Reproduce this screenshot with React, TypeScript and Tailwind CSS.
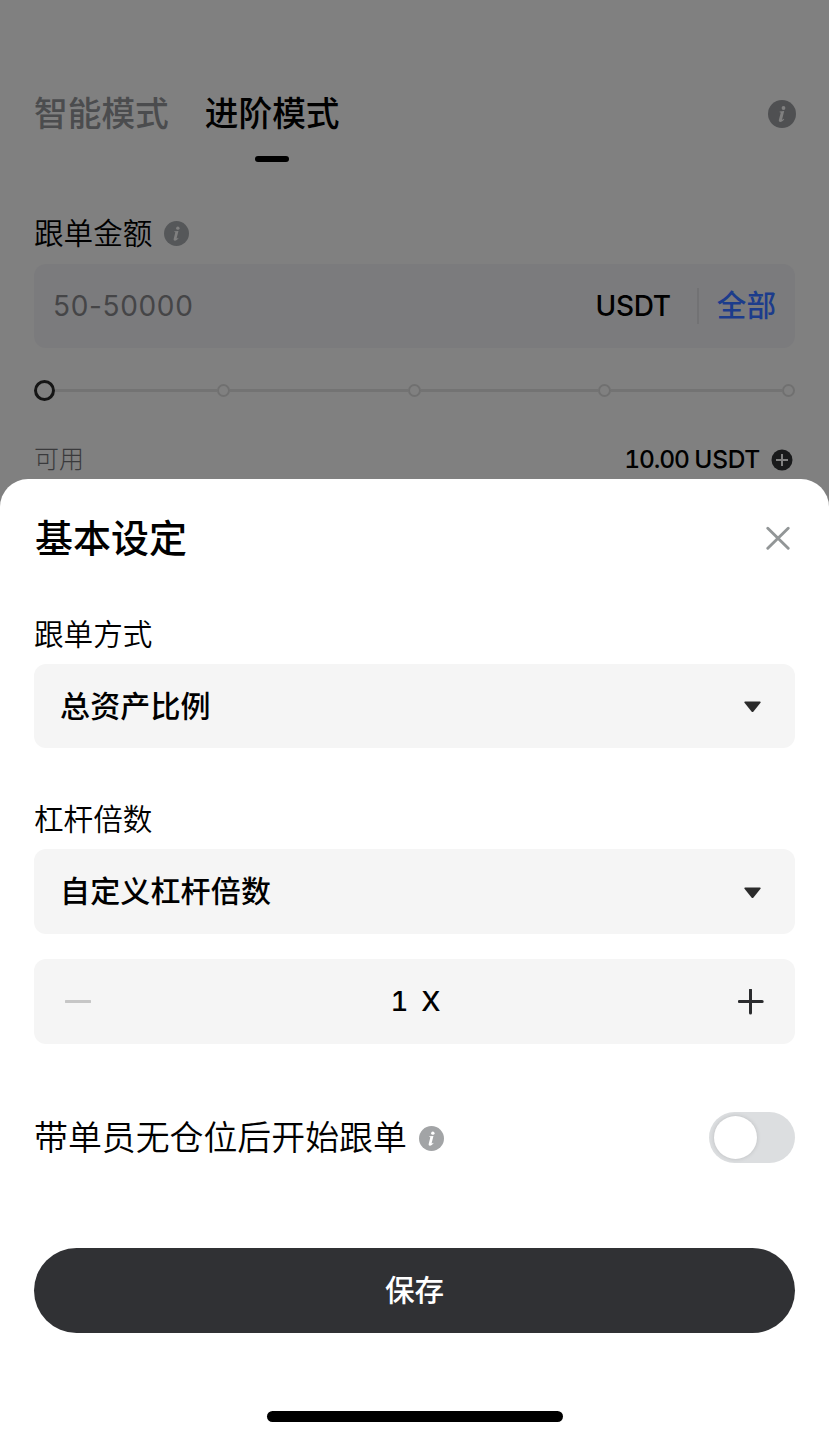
import React from "react";

const InfoIcon = ({ className }: { className: string }) => (
  <svg viewBox="0 0 28 28" className={`shrink-0 ${className}`} aria-hidden="true">
    <circle cx="14" cy="14" r="14" fill="currentColor" />
    <g className="fill-(--mark)">
      <circle cx="15.5" cy="8" r="1.9" />
      <path d="M11.7 11.4 L16.2 11.1 L14.2 19.1 C14 20 14.5 20 15.7 18.7 L16.3 19.3 C14.9 21.2 13.6 22 12.3 22 C11 22 10.6 21.1 10.9 19.8 L12.6 13.2 C12.8 12.4 12.5 12.3 11.5 12.2 Z" />
    </g>
  </svg>
);

const Caret = () => (
  <svg viewBox="0 0 18 12" className="mt-0.5 h-3 w-[18px] text-[#2b2b2b]" aria-hidden="true">
    <path d="M1.1 .6 H15.9 Q17.2 .8 16.3 2.1 L9.5 10.6 Q8.5 11.6 7.5 10.6 L.7 2.1 Q-.2 .8 1.1 .6 Z" fill="currentColor" />
  </svg>
);

const Step = () => <span className="size-[13px] shrink-0 rounded-full border-2 border-[#707070]" />;
const Rail = ({ className }: { className: string }) => <span className={`h-[3px] bg-[#737373] ${className}`} />;

const Select = ({ label, className }: { label: string; className: string }) => (
  <button className={`flex w-full items-center justify-between rounded-xl bg-[#f5f5f5] pr-[33px] pl-[26px] text-[30px] leading-none font-medium tracking-[0.15px] ${className}`}>
    <span className="-mt-px">{label}</span>
    <Caret />
  </button>
);

export default function App() {
  return (
    <div className="flex h-[1439px] w-[829px] flex-col overflow-hidden bg-[#808080] font-[Inter,'Noto_Sans_CJK_SC',sans-serif] text-black">
      <section className="flex h-[479px] shrink-0 flex-col px-[34px]">
        <header className="flex h-[162px] shrink-0 items-start justify-between pt-[93px]">
          <nav className="flex gap-[36px] text-[33.7px] leading-[42px] font-medium">
            <span className="text-[#4b4c4e]">智能模式</span>
            <div className="flex flex-col items-center">
              <span>进阶模式</span>
              <span className="mt-[21px] h-1.5 w-[34px] rounded-[3px] bg-black" />
            </div>
          </nav>
          <InfoIcon className="mt-[7px] -mr-px size-7 text-[#4f5052] [--mark:#808080]" />
        </header>
        <div className="mt-[50px] flex h-[42px] shrink-0 items-center gap-3 text-[29.6px] leading-[42px]">
          <span className="font-[350]">跟单金额</span>
          <InfoIcon className="mt-px size-[25px] text-[#555759] [--mark:#808080]" />
        </div>
        <div className="mt-2.5 flex h-[84px] shrink-0 items-center rounded-xl bg-[#7b7b7d] pr-[19px] pl-[19px]">
          <span className="flex-1 text-[28px] tracking-[0.65px] text-[#454547]">50-50000</span>
          <span className="text-[28px] font-medium tracking-[-0.3px]">USDT</span>
          <span className="ml-[26px] h-9 w-0.5 bg-[#727274]" />
          <span className="-mt-0.5 ml-[18px] text-[29.6px] leading-[42px] font-medium text-[#1c3c8c]">全部</span>
        </div>
        <div className="mt-8 flex h-[21px] shrink-0 items-center">
          <span className="size-[21px] shrink-0 rounded-full border-3 border-[#151515]" />
          <Rail className="w-[162px]" />
          <Step />
          <Rail className="w-[178px]" />
          <Step />
          <Rail className="w-[177px]" />
          <Step />
          <Rail className="flex-1" />
          <Step />
        </div>
        <div className="mt-[39px] flex h-[39px] shrink-0 items-center">
          <span className="flex-1 text-[25px] leading-[39px] font-light text-[#3a3a3c]">可用</span>
          <div className="flex gap-[5.5px] text-[24.5px] font-medium">
            <span className="tabular-nums tracking-[-1.1px]">10.00</span>
            <span className="tracking-[-0.3px]">USDT</span>
          </div>
          <svg viewBox="0 0 22 22" className="mr-0.5 ml-[11px] size-[22px]" aria-hidden="true">
            <circle cx="11" cy="11" r="10.5" fill="#191a1b" />
            <path d="M11 5V17M5 11H17" stroke="#808080" strokeWidth="2" />
          </svg>
        </div>
      </section>

      <main className="flex flex-1 flex-col rounded-t-[28px] bg-white px-[34px]">
        <div className="mt-[34px] flex h-[50px] items-center justify-between">
          <h1 className="pl-px text-[38px] leading-[50px] font-medium">基本设定</h1>
          <svg viewBox="0 0 24 24" className="mr-[5px] size-6" aria-hidden="true">
            <path d="M1.8 2.3L22.2 22.2M22.2 2.3L1.8 22.2" stroke="#929697" strokeWidth="2.9" strokeLinecap="round" />
          </svg>
        </div>

        <span className="mt-[50px] h-[42px] text-[29.6px] leading-[42px] font-[350]">跟单方式</span>
        <Select label="总资产比例" className="mt-[9px] h-[84px]" />

        <span className="mt-[50px] h-[42px] text-[29.6px] leading-[42px] font-[350]">杠杆倍数</span>
        <Select label="自定义杠杆倍数" className="mt-[9px] h-[85px]" />

        <div className="mt-[25px] flex h-[85px] items-center justify-between rounded-xl bg-[#f5f5f5] px-[31px]">
          <svg viewBox="0 0 26 26" className="size-[26px]" aria-hidden="true">
            <path d="M1 12.5H25" stroke="#c6c6c6" strokeWidth="3" strokeLinecap="round" />
          </svg>
          <div className="flex items-baseline gap-[13px] pl-0.5 text-[27.5px] leading-none font-medium tabular-nums">
            <span>1</span>
            <span>X</span>
          </div>
          <svg viewBox="0 0 26 26" className="size-[26px]" aria-hidden="true">
            <path d="M1.2 12.5H24.2M12.5 .9V24.1" stroke="#2b2c2e" strokeWidth="3" strokeLinecap="round" />
          </svg>
        </div>

        <div className="mt-[68px] flex h-[51px] items-center">
          <span className="text-[33.9px] leading-[51px] font-[350]">带单员无仓位后开始跟单</span>
          <InfoIcon className="mt-0.5 ml-3 size-[25px] text-[#a2a4a6] [--mark:#ffffff]" />
          <button className="ml-auto flex h-[51px] w-[86px] items-center rounded-full bg-[#dcdee0] pl-[5px]" aria-label="带单员无仓位后开始跟单">
            <span className="size-[43px] rounded-full bg-white shadow-[0_0_4px_rgba(0,0,0,0.15)]" />
          </button>
        </div>

        <button className="mt-[85px] h-[85px] w-full shrink-0 rounded-full bg-[#303134] text-[29.6px] leading-none font-medium text-white">
          保存
        </button>
        <div className="mt-[78px] h-[11px] w-[296px] self-center rounded-full bg-black" />
      </main>
    </div>
  );
}
